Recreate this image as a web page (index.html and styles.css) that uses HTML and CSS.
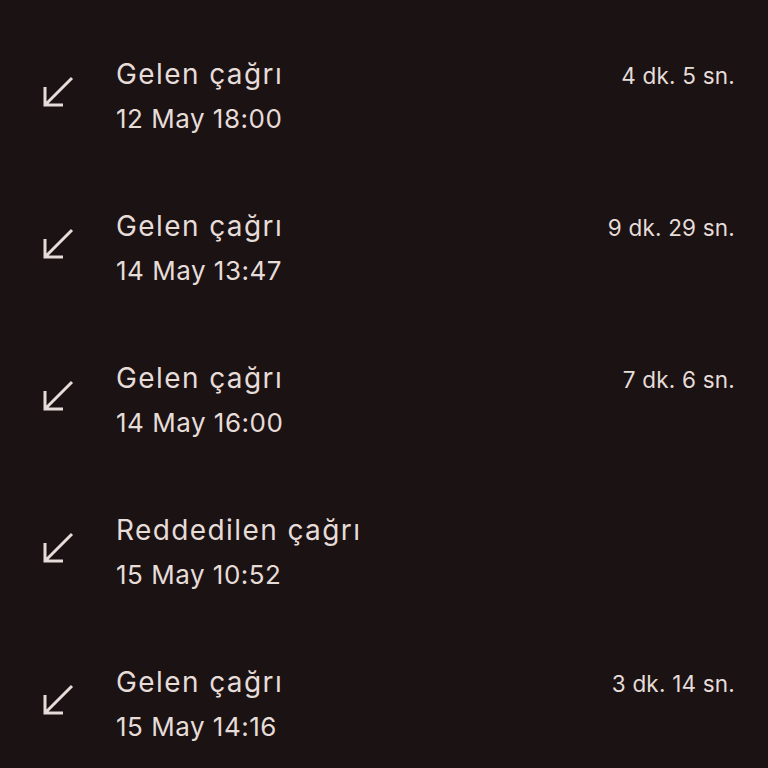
FILE: index.html
```html
<!DOCTYPE html>
<html lang="tr">
<head>
<meta charset="utf-8">
<link rel="stylesheet" href="styles.css">
</head>
<body>
<ul class="calls">
  <li class="call">
    <svg class="icon" viewBox="0 0 34 34"><path d="M31 3L4 30M4 12V30H22"/></svg>
    <div class="info">
      <div class="top"><span class="title">Gelen çağrı</span><span class="dur">4 dk. 5 sn.</span></div>
      <div class="date">12 May 18:00</div>
    </div>
  </li>
  <li class="call">
    <svg class="icon" viewBox="0 0 34 34"><path d="M31 3L4 30M4 12V30H22"/></svg>
    <div class="info">
      <div class="top"><span class="title">Gelen çağrı</span><span class="dur">9 dk. 29 sn.</span></div>
      <div class="date">14 May 13:47</div>
    </div>
  </li>
  <li class="call">
    <svg class="icon" viewBox="0 0 34 34"><path d="M31 3L4 30M4 12V30H22"/></svg>
    <div class="info">
      <div class="top"><span class="title">Gelen çağrı</span><span class="dur">7 dk. 6 sn.</span></div>
      <div class="date">14 May 16:00</div>
    </div>
  </li>
  <li class="call">
    <svg class="icon" viewBox="0 0 34 34"><path d="M31 3L4 30M4 12V30H22"/></svg>
    <div class="info">
      <div class="top"><span class="title">Reddedilen çağrı</span><span class="dur"></span></div>
      <div class="date">15 May 10:52</div>
    </div>
  </li>
  <li class="call">
    <svg class="icon" viewBox="0 0 34 34"><path d="M31 3L4 30M4 12V30H22"/></svg>
    <div class="info">
      <div class="top"><span class="title">Gelen çağrı</span><span class="dur">3 dk. 14 sn.</span></div>
      <div class="date">15 May 14:16</div>
    </div>
  </li>
</ul>
</body>
</html>
```

FILE: styles.css
```css
html, body {
  margin: 0;
  padding: 0;
  background: #1b1213;
  height: 100%;
  overflow: hidden;
}
body {
  font-family: Inter, Roboto, "Noto Sans", sans-serif;
  color: #e6dcd8;
}
.calls {
  list-style: none;
  margin: 0;
  padding: 52px 33px 0 41px;
  display: flex;
  flex-direction: column;
  gap: 63px;
}
.call {
  display: flex;
  align-items: flex-start;
  height: 89px;
}
.icon {
  width: 34px;
  height: 34px;
  margin-top: 23px;
  margin-right: 41px;
  flex: none;
  fill: none;
  stroke: #e6dcd8;
  stroke-width: 3;
}
.info {
  flex: 1;
  display: flex;
  flex-direction: column;
}
.top {
  display: flex;
  justify-content: space-between;
  align-items: baseline;
}
.title {
  font-size: 28px;
  line-height: 44px;
  letter-spacing: 1.4px;
}
.dur {
  font-size: 22.5px;
  letter-spacing: 0.2px;
}
.date {
  font-size: 26px;
  line-height: 45px;
  letter-spacing: 0.5px;
}
```
